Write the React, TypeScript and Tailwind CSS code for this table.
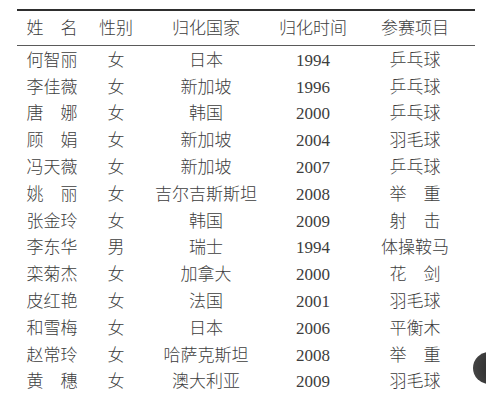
import React from 'react';

const rows: [string, string, string, string, string][] = [
  ['何智丽', '女', '日本', '1994', '乒乓球'],
  ['李佳薇', '女', '新加坡', '1996', '乒乓球'],
  ['唐　娜', '女', '韩国', '2000', '乒乓球'],
  ['顾　娟', '女', '新加坡', '2004', '羽毛球'],
  ['冯天薇', '女', '新加坡', '2007', '乒乓球'],
  ['姚　丽', '女', '吉尔吉斯斯坦', '2008', '举　重'],
  ['张金玲', '女', '韩国', '2009', '射　击'],
  ['李东华', '男', '瑞士', '1994', '体操鞍马'],
  ['栾菊杰', '女', '加拿大', '2000', '花　剑'],
  ['皮红艳', '女', '法国', '2001', '羽毛球'],
  ['和雪梅', '女', '日本', '2006', '平衡木'],
  ['赵常玲', '女', '哈萨克斯坦', '2008', '举　重'],
  ['黄　穗', '女', '澳大利亚', '2009', '羽毛球'],
];

const headers = ['姓　名', '性别', '归化国家', '归化时间', '参赛项目'];

const cjk = "font-['Liberation_Serif','Noto_Sans_CJK_SC',serif] font-light";
const cols = 'grid grid-cols-[70px_58px_122px_92px_112px] items-center text-center';

const App: React.FC = () => {
  return (
    <div className="relative w-[486px] h-[400px] overflow-hidden bg-white text-[#3d3d3d]">
      <div className="pt-[9px] pl-[17px]">
        <div className="w-[458px] border-t-2 border-[#2e2e2e]">
          <div className={`${cols} h-[35px] pt-[1px] border-b border-[#5a5a5a] text-[17px] ${cjk}`}>
            {headers.map((h) => (
              <div key={h}>{h}</div>
            ))}
          </div>
          <div className="pt-[1px]">
            {rows.map((r) => (
              <div key={r[0] + r[3]} className={`${cols} h-[26.8px] text-[17px] leading-none ${cjk}`}>
                <div>{r[0]}</div>
                <div>{r[1]}</div>
                <div>{r[2]}</div>
                <div className="font-['Liberation_Serif',serif] font-normal text-[17px]">{r[3]}</div>
                <div>{r[4]}</div>
              </div>
            ))}
          </div>
        </div>
      </div>
      <div className="absolute left-[473px] top-[352px] w-[40px] h-[32px] rounded-full bg-[radial-gradient(circle_at_70%_50%,#1f1f1f,#4a4a4a)]" />
    </div>
  );
};

export default App;
